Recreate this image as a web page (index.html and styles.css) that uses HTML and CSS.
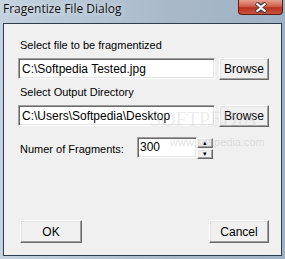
FILE: index.html
```html
<!DOCTYPE html>
<html lang="en">
<head>
  <meta charset="UTF-8" />
  <title>Fragentize File Dialog</title>
  <link rel="stylesheet" href="styles.css">
</head>
<body>
  <div class="window">
    <div class="titlebar">
      <span class="title">Fragentize File Dialog</span>
      <div class="close">
        <svg width="16" height="11" viewBox="0 0 16 11">
          <path d="M3 1 L8 4.5 L13 1 M3 10 L8 6.5 L13 10" stroke="#3b3b3b" stroke-width="4" fill="none"/>
          <path d="M3.5 1.5 L8 5 L12.5 1.5 M3.5 9.5 L8 6 L12.5 9.5" stroke="#fff" stroke-width="2.2" fill="none"/>
        </svg>
      </div>
    </div>
    <div class="client">
      <div class="label first">Select file to be fragmentized</div>
      <div class="row">
        <div class="textbox">C:\Softpedia Tested.jpg</div>
        <div class="btn browse">Browse</div>
      </div>
      <div class="label second">Select Output Directory</div>
      <div class="row">
        <div class="textbox">C:\Users\Softpedia\Desktop</div>
        <div class="btn browse">Browse</div>
      </div>
      <div class="spin-row">
        <div class="label">Numer of Fragments:</div>
        <div class="textbox spin-box">300</div>
        <div class="spin-btns">
          <div class="btn spin up">&#9652;</div>
          <div class="btn spin down">&#9662;</div>
        </div>
      </div>
      <div class="actions">
        <div class="btn ok">OK</div>
        <div class="btn cancel">Cancel</div>
      </div>
      <div class="watermark">SOFTPEDIA</div>
      <div class="watermark-url">www.softpedia.com</div>
    </div>
  </div>
</body>
</html>
```

FILE: styles.css
```css
body {
  margin: 0;
  width: 285px;
  height: 259px;
  overflow: hidden;
  font-family: 'Liberation Sans', Arial, sans-serif;
  font-size: 11px;
  color: #000;
}
.window {
  width: 285px;
  height: 259px;
  box-sizing: border-box;
  padding: 0 3px 3px 3px;
  background: linear-gradient(90deg, #c4d2df 0%, #b4c4d3 35%, #a8b8c8 60%, #9fb2c4 100%);
  display: flex;
  flex-direction: column;
}
.titlebar {
  height: 23px;
  display: flex;
  justify-content: space-between;
  align-items: flex-start;
  flex-shrink: 0;
}
.title {
  font-family: 'Open Sans', 'DejaVu Sans', sans-serif;
  font-size: 12px;
  line-height: 16px;
  padding-top: 1px;
  color: #111;
  text-shadow: 0 0 6px rgba(255,255,255,0.8);
}
.close {
  width: 45px;
  height: 15px;
  margin-right: -1px;
  box-sizing: border-box;
  border: 1px solid #5a1c16;
  border-top: none;
  border-radius: 0 0 4px 4px;
  background: linear-gradient(180deg, #e5a08f 0%, #d3614b 45%, #b8321d 55%, #c9523c 100%);
  display: flex;
  align-items: center;
  justify-content: center;
}
.client {
  position: relative;
  overflow: hidden;
  flex: 1;
  background: #f0f0f0;
  border: 1px solid #2e3d4c;
  padding: 15px 12px 0 14px;
}
.label {
  line-height: 13px;
  padding-left: 2px;
}
.label.second {
  margin-top: 6px;
}
.row {
  display: flex;
  gap: 4px;
  margin-top: 6px;
  align-items: flex-start;
}
.textbox {
  box-sizing: border-box;
  width: 197px;
  height: 21px;
  background: #fff;
  border-top: 1px solid #a0a0a0;
  border-left: 1px solid #a0a0a0;
  border-right: 1px solid #fff;
  border-bottom: 1px solid #fff;
  box-shadow: inset 1px 1px 0 #696969, inset -1px -1px 0 #e3e3e3;
  padding: 3px 0 0 3px;
  font-size: 12px;
  line-height: 14px;
  white-space: nowrap;
  overflow: hidden;
}
.btn {
  box-sizing: border-box;
  background: #f0f0f0;
  border-top: 1px solid #fff;
  border-left: 1px solid #fff;
  border-right: 1px solid #696969;
  border-bottom: 1px solid #696969;
  box-shadow: inset -1px -1px 0 #a0a0a0, inset 1px 1px 0 #e3e3e3;
  display: flex;
  align-items: center;
  justify-content: center;
  font-size: 12px;
}
.browse {
  width: 50px;
  height: 22px;
}
.spin-row {
  display: flex;
  align-items: flex-start;
  margin-top: 10px;
}
.spin-row .label {
  width: 117px;
  padding-top: 6px;
}
.spin-box {
  width: 60px;
  height: 21px;
  padding: 2px 0 0 2px;
}
.spin-btns {
  display: flex;
  flex-direction: column;
  gap: 1px;
  padding-top: 1px;
}
.spin {
  width: 16px;
  height: 10px;
  font-size: 7px;
  line-height: 10px;
}
.actions {
  display: flex;
  justify-content: space-between;
  margin-top: 61px;
  padding-left: 2px;
}
.ok {
  width: 62px;
  height: 23px;
}
.cancel {
  width: 60px;
  height: 23px;
}
.watermark {
  position: absolute;
  left: 146px;
  top: 84px;
  font-family: 'Liberation Serif', serif;
  font-size: 20px;
  color: rgba(205, 205, 205, 0.35);
  pointer-events: none;
}
.watermark-url {
  position: absolute;
  left: 166px;
  top: 112px;
  font-size: 11px;
  color: rgba(190, 190, 190, 0.45);
  pointer-events: none;
}
```
